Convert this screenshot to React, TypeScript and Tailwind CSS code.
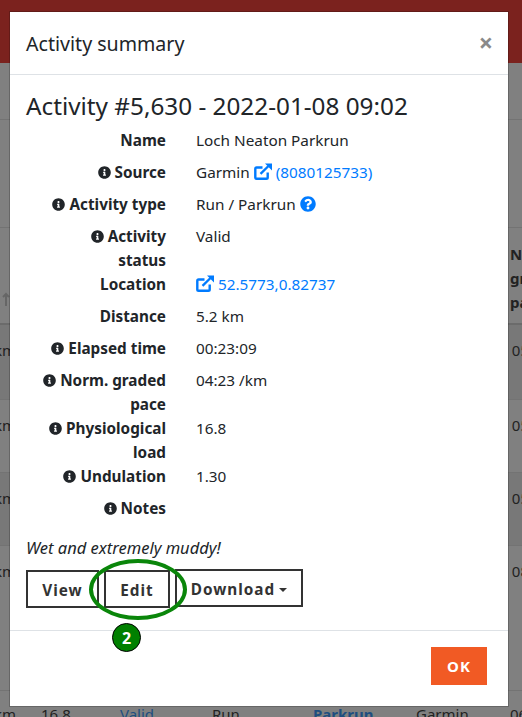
import { FaInfoCircle, FaQuestionCircle } from "react-icons/fa";
import type { ReactNode } from "react";

const font = { fontFamily: '"Noto Sans", sans-serif' };

function InfoIcon() {
  return <FaInfoCircle className="inline-block w-[13px] h-[13px] mr-[4px] align-[-1px] text-[#212529]" aria-hidden />;
}

function LinkIcon() {
  return (
    <svg viewBox="0 0 18 17" className="inline-block w-[18px] h-[17px] align-[-2px]" fill="none" stroke="#007bff" strokeWidth="2.4" aria-hidden>
      <path d="M8.5 4.5H2.6a1.3 1.3 0 0 0-1.3 1.3v8.6a1.3 1.3 0 0 0 1.3 1.3h9.8a1.3 1.3 0 0 0 1.3-1.3V9.5" />
      <path d="M6.5 10.8 14.5 3" />
      <path d="M11 0.5H18V7.5Z" fill="#007bff" stroke="none" />
    </svg>
  );
}

function Row({ label, info = true, children }: { label: string; info?: boolean; children?: ReactNode }) {
  return (
    <>
      <dt className="font-bold text-right text-[#212529] pl-[15px]">
        {info && <InfoIcon />}
        {label}
      </dt>
      <dd className="mb-2 text-[#212529]">{children}</dd>
    </>
  );
}

function BgRow({ h, left, right }: { h: string; left?: string; right?: string }) {
  return (
    <div className={`${h} border-b border-[#737373] flex justify-between items-start pt-[13px] text-[15px] text-[#222]`}>
      <span className="-ml-[6px]">{left}</span>
      <span className="-mr-[7px]">{right}</span>
    </div>
  );
}

export default function App() {
  return (
    <div className="relative h-[717px] w-[522px] overflow-hidden bg-[#808080] leading-6" style={font}>
      <div className="h-[63px] bg-[#7b221e]" />
      <div className="h-[57px] border-b border-[#737373]" />
      <div className="h-[108px] border-b border-[#737373]" />
      <div className="h-[97px] border-b-2 border-[#6b6b6b] relative">
        <div className="absolute left-[510px] top-[14px] w-[12px] overflow-hidden font-bold text-[15px] text-[#222]">
          No
          <br />
          gr
          <br />
          pa
        </div>
        <svg viewBox="0 0 8 14" className="absolute left-[2px] top-[64px] w-[8px] h-[14px]" fill="none" stroke="#666" strokeWidth="2" aria-hidden>
          <path d="M4 14V2M1 5l3-3 3 3" />
        </svg>
      </div>
      <BgRow h="h-[75px] bg-[#787878]" left="km" right="05" />
      <BgRow h="h-[73px]" left="km" right="05" />
      <BgRow h="h-[73px] bg-[#787878]" left="km" right="05" />
      <BgRow h="h-[145px]" left="km" right="08" />
      <div className="flex pt-[11px] text-[15px] text-[#222]">
        <span className="-ml-[6px] w-[47px] shrink-0">km</span>
        <span className="w-[79px] shrink-0">16.8</span>
        <span className="w-[92px] shrink-0 text-[#1e4e80]">Valid</span>
        <span className="w-[101px] shrink-0">Run</span>
        <span className="w-[103px] shrink-0 font-bold text-[#1e4e80]">Parkrun</span>
        <span className="w-[94px] shrink-0">Garmin</span>
        <span className="shrink-0">06</span>
      </div>

      {/* modal */}
      <div className="absolute left-[10px] top-[12px] w-[498px] h-[694px] bg-white shadow-[0_0_0_1px_rgba(0,0,0,0.2)] flex flex-col">
        <div className="h-[63px] border-b border-[#dee2e6] px-4 flex items-center justify-between">
          <span className="text-[19.6px] text-[#212529] mt-[1px]">Activity summary</span>
          <span className="text-[25px] font-bold text-[#8a8a8a] leading-none -mt-[1px] -mr-[1px]">×</span>
        </div>
        <div className="flex-1 px-4 pt-4">
          <h3 className="text-[24.3px] leading-[29px] text-[#212529] mb-2">Activity #5,630 - 2022-01-08 09:02</h3>
          <dl className="grid grid-cols-[140px_1fr] gap-x-[30px] text-[15.3px] mt-[4px]">
            <Row label="Name" info={false}>Loch Neaton Parkrun</Row>
            <Row label="Source">
              Garmin <LinkIcon /> <span className="text-[#007bff]">(8080125733)</span>
            </Row>
            <Row label="Activity type">
              Run / Parkrun <FaQuestionCircle className="inline-block w-[16px] h-[16px] align-[-2px] text-[#007bff]" />
            </Row>
            <Row label="Activity status">Valid</Row>
            <Row label="Location" info={false}>
              <LinkIcon /> <span className="text-[#007bff]">52.5773,0.82737</span>
            </Row>
            <Row label="Distance" info={false}>5.2 km</Row>
            <Row label="Elapsed time">00:23:09</Row>
            <Row label="Norm. graded pace">04:23 /km</Row>
            <Row label="Physiological load">16.8</Row>
            <Row label="Undulation">1.30</Row>
            <Row label="Notes" />
          </dl>
          <p className="italic text-[16.5px] text-[#212529] mt-4">Wet and extremely muddy!</p>
          <div className="flex items-start gap-[5px] mt-[9px] text-[15.3px] font-bold tracking-[1px] text-[#333]">
            <button className="h-[38px] w-[73px] border-2 border-[#333] mt-[1px] pt-[2px]">View</button>
            <button className="h-[38px] w-[66px] border-2 border-[#333] mt-[1px] pt-[2px]">Edit</button>
            <button className="h-[38px] w-[128px] border-2 border-[#333] pt-[2px]">
              Download
              <span className="inline-block ml-[4px] align-[3px] border-x-[4px] border-x-transparent border-t-[4px] border-t-[#333]" />
            </button>
          </div>
        </div>
        <div className="h-[76px] border-t border-[#dee2e6] flex items-start justify-end pt-4 pr-[21px]">
          <button className="w-[56px] h-[38px] bg-[#f15a24] text-white font-bold text-[15px] tracking-[1px]">OK</button>
        </div>
      </div>

      {/* annotation */}
      <div className="absolute left-[89px] top-[559px] w-[98px] h-[61px] rounded-[50%] border-[4px] border-[#0a860a]" />
      <div className="absolute left-[112px] top-[623px] w-[29px] h-[29px] rounded-full bg-[#008000] border border-black text-white font-bold text-[16px] flex items-center justify-center">
        2
      </div>
    </div>
  );
}
